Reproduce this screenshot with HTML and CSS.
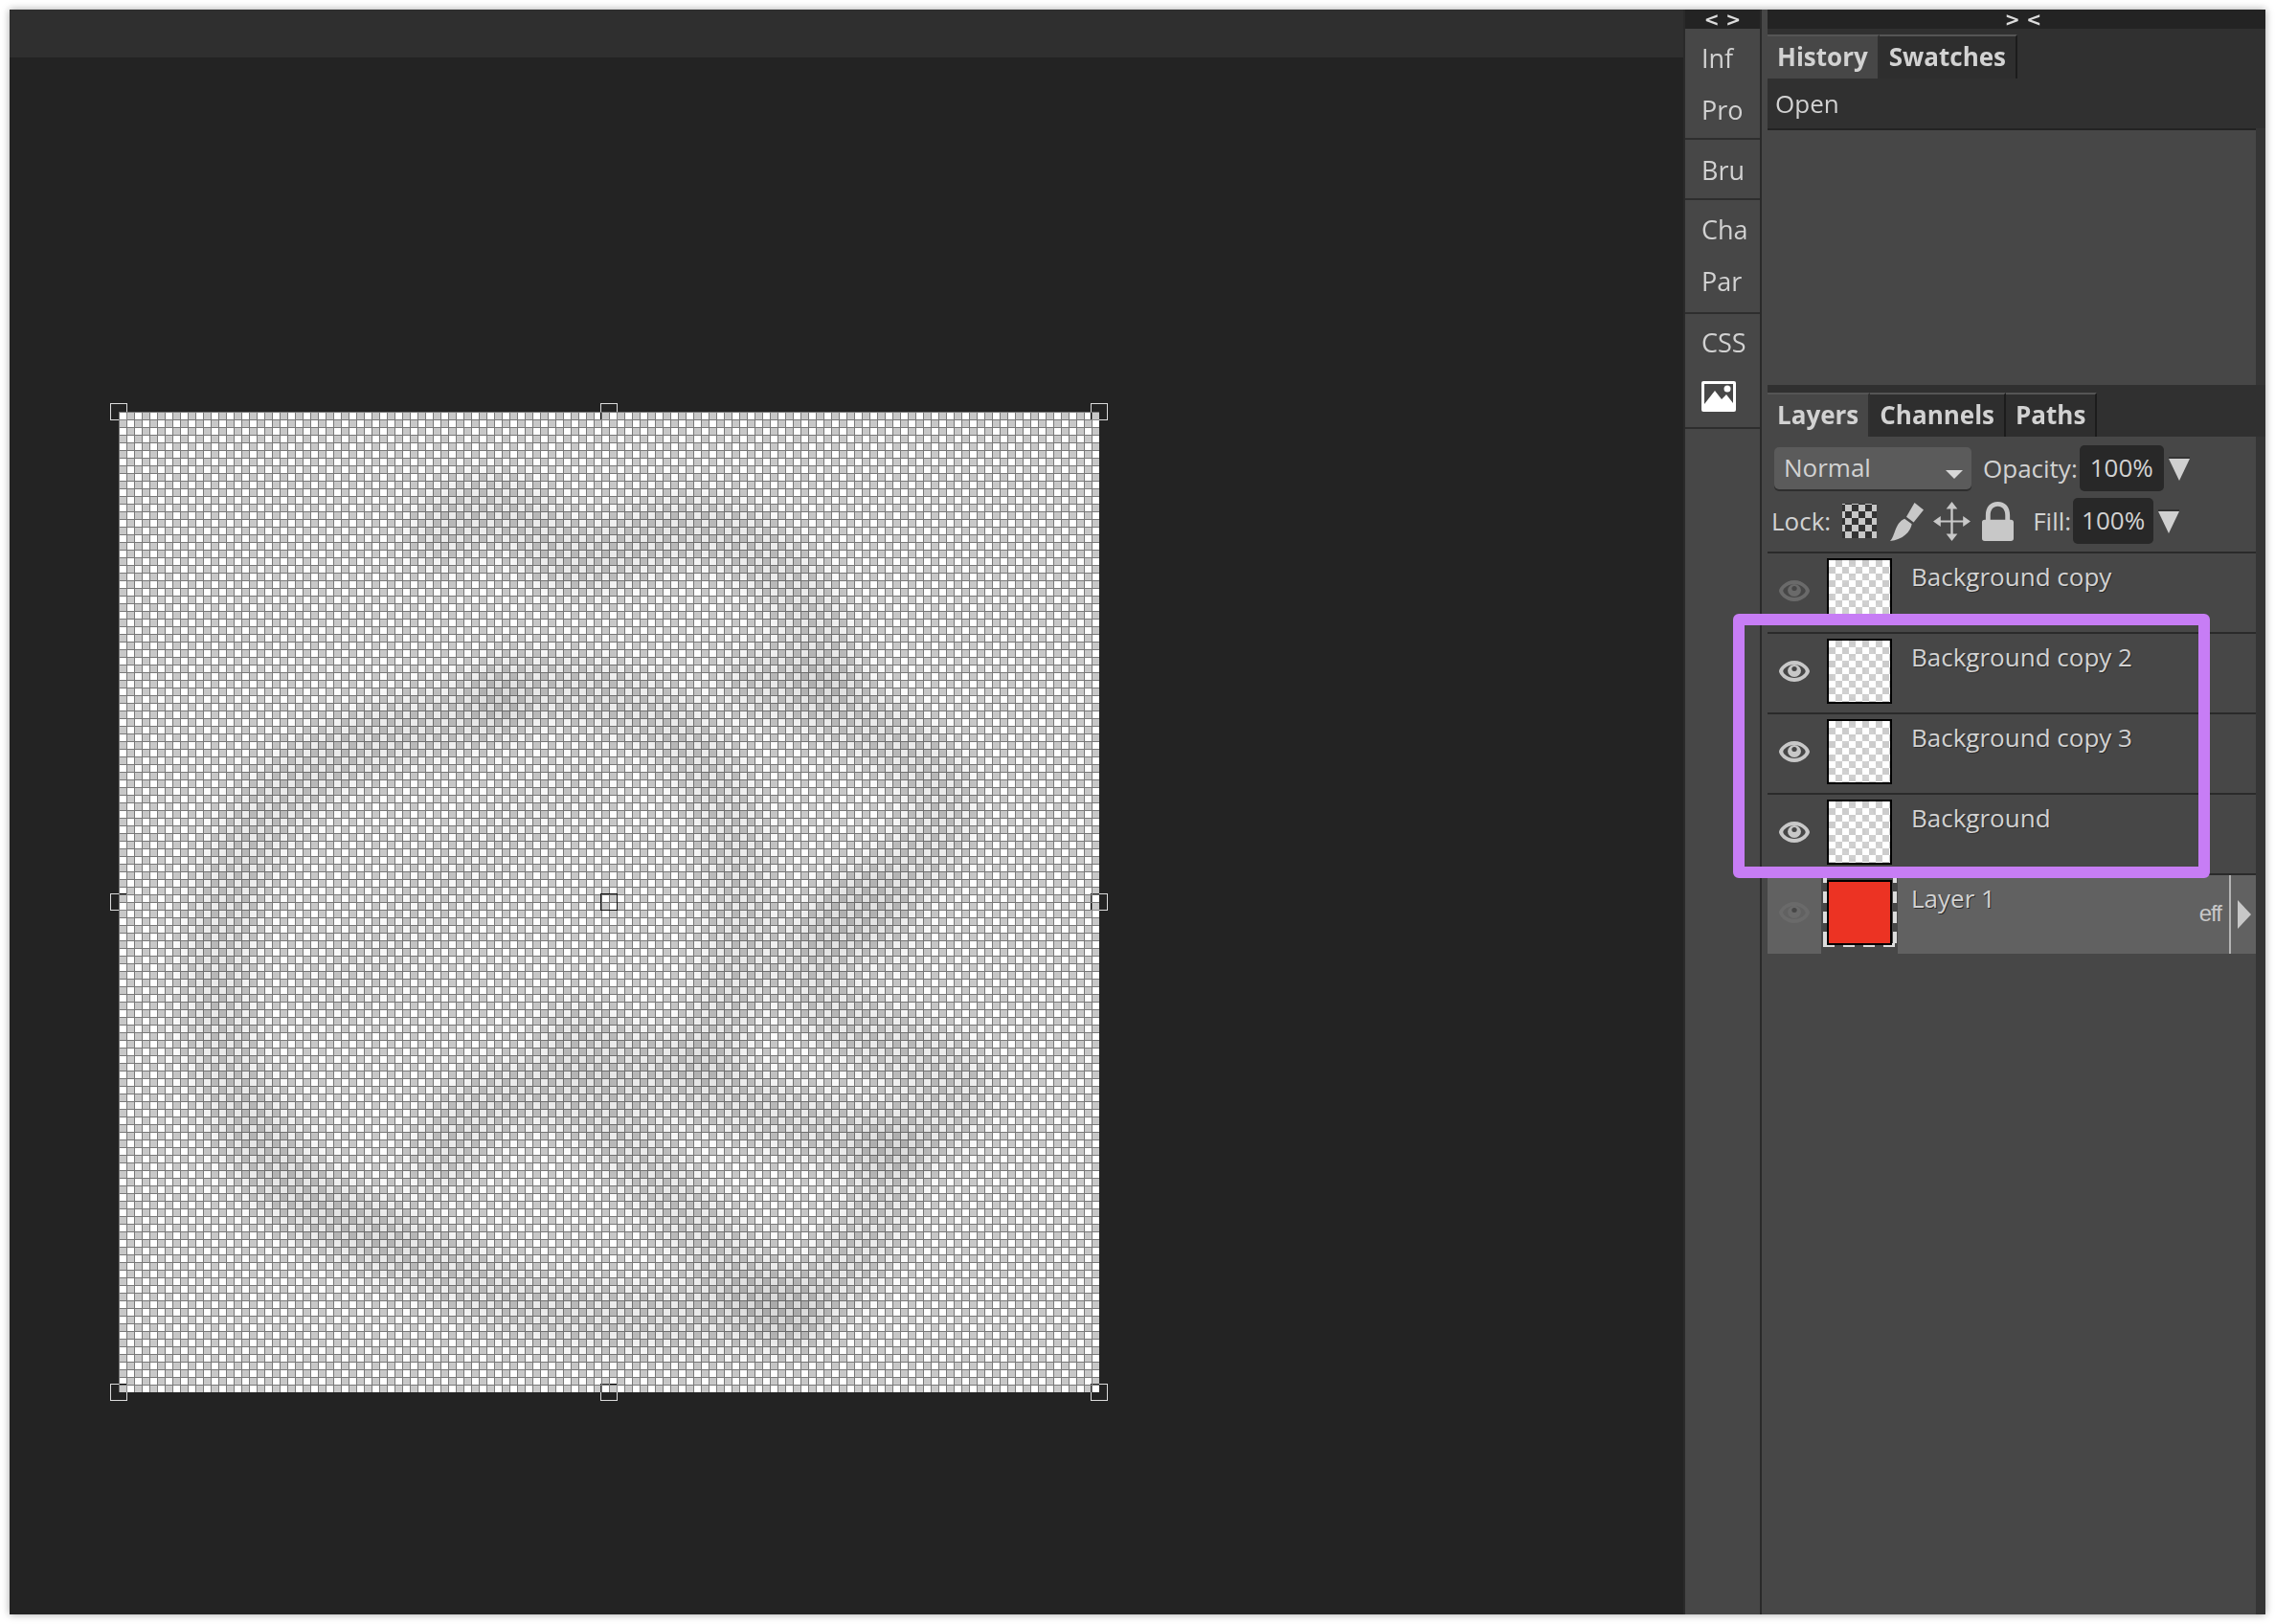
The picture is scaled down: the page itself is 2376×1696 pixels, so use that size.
FILE: index.html
```html
<!DOCTYPE html>
<html lang="en">
<head>
  <meta charset="UTF-8" />
  <title>Layers</title>
  <link rel="stylesheet" href="styles.css">
</head>
<body>
  <svg class="defs">
    <symbol id="smoke" viewBox="82 284 676 676">
      <g fill="none" stroke-opacity="0.13" stroke-width="48" stroke-linecap="round" stroke-linejoin="round">
        <path d="M305 368C325 340 360 345 385 385C420 400 450 350 500 368C540 385 560 420 572 462" />
        <path d="M340 490C270 500 200 520 170 585C140 650 145 740 180 800C215 850 280 860 320 880C370 920 480 905 550 905C590 880 610 830 615 800" />
        <path d="M350 475C420 470 480 490 500 560C515 620 515 670 490 720" />
        <path d="M520 470C590 490 650 520 650 560C640 610 575 620 560 670C565 720 650 720 662 750C650 790 600 790 540 770C480 750 430 730 395 712" />
        <path d="M305 800C320 760 360 735 410 765C450 800 470 850 545 905" />
        <path d="M570 640C590 610 610 620 615 650" stroke-opacity="0.07" />
        <path d="M190 770C210 820 240 830 270 845" stroke-opacity="0.05" />
        <path d="M230 680C280 660 340 560 400 540" stroke-opacity="0.05" />
      </g>
    </symbol>
    <symbol id="eye" viewBox="0 0 30 24" preserveAspectRatio="none">
      <path fill-rule="evenodd" d="M15 1C24 1 30 9 30 12S24 23 15 23S0 15 0 12S6 1 15 1ZM15 5C9 5 4 9.500 4 12S9 19 15 19S26 14.500 26 12S21 5 15 5Z" />
      <circle cx="15" cy="11.500" r="6.500" />
      <circle class="eye-pupil" cx="15" cy="9.500" r="2.500" />
    </symbol>
  </svg>

  <div class="window">
    <main class="workspace">
      <div class="topbar"></div>
      <div class="stage">
        <div class="artboard">
          <svg class="smoke"><use href="#smoke" /></svg>
          <span class="handle h-tl"></span>
          <span class="handle h-tc"></span>
          <span class="handle h-tr"></span>
          <span class="handle h-ml"></span>
          <span class="handle h-mc"></span>
          <span class="handle h-mr"></span>
          <span class="handle h-bl"></span>
          <span class="handle h-bc"></span>
          <span class="handle h-br"></span>
        </div>
      </div>
    </main>

    <aside class="dock">
      <div class="dock-head">&lt; &gt;</div>
      <div class="dock-group group-a">
        <div class="dock-item">Inf</div>
        <div class="dock-item">Pro</div>
      </div>
      <div class="dock-group group-b">
        <div class="dock-item">Bru</div>
      </div>
      <div class="dock-group group-c">
        <div class="dock-item">Cha</div>
        <div class="dock-item">Par</div>
      </div>
      <div class="dock-group group-d">
        <div class="dock-item">CSS</div>
        <div class="dock-item dock-icon">
          <svg width="36" height="32" viewBox="0 0 36 32">
            <rect width="36" height="32" rx="2" fill="#fff" />
            <path d="M3 3H33V23L26 14L21 19L14 10L3 24Z" fill="#474747" />
            <circle cx="27" cy="8" r="3.500" fill="#fff" />
          </svg>
        </div>
      </div>
    </aside>

    <section class="panels">
      <div class="panels-head">&gt; &lt;</div>

      <div class="tabs">
        <div class="tab active">History</div>
        <div class="tab">Swatches</div>
      </div>
      <div class="history-row">Open</div>
      <div class="history-empty"></div>

      <div class="tabs tabs-layers">
        <div class="tab active">Layers</div>
        <div class="tab">Channels</div>
        <div class="tab">Paths</div>
      </div>

      <div class="layers-panel">
        <div class="controls">
          <div class="select">Normal<span class="select-arrow"></span></div>
          <span class="label label-opacity">Opacity:</span>
          <div class="num">100%</div>
          <span class="drop"></span>
        </div>
        <div class="controls controls-lock">
          <span class="label">Lock:</span>
          <span class="lock-checker"></span>
          <svg class="lock-brush" width="36" height="41" viewBox="0 0 38 44" preserveAspectRatio="none" fill="#c8c8c8">
            <path d="M28 1L38 9L27 23L19 17Z" />
            <path d="M17 19L25 25C24 33 15 43 1 44C7 38 6 24 17 19Z" />
          </svg>
          <svg class="lock-move" width="39" height="41" viewBox="0 0 40 44" preserveAspectRatio="none" fill="#c8c8c8">
            <path d="M20 0L26 8H21.200V20.800H32V16L40 22L32 28V23.200H21.200V36H26L20 44L14 36H18.800V23.200H8V28L0 22L8 16V20.800H18.800V8H14Z" />
          </svg>
          <svg class="lock-pad" width="33" height="41" viewBox="0 0 34 44" preserveAspectRatio="none" fill="#c8c8c8">
            <path fill-rule="evenodd" d="M17 0C25 0 30 6 30 15V20H31C33 20 34 21 34 23V41C34 43 33 44 31 44H3C1 44 0 43 0 41V23C0 21 1 20 3 20H4V15C4 6 9 0 17 0ZM17 5C12 5 9 9 9 15V20H25V15C25 9 22 5 17 5Z" />
          </svg>
          <span class="label label-fill">Fill:</span>
          <div class="num num-fill">100%</div>
          <span class="drop"></span>
        </div>

        <div class="layer">
          <svg class="eye off"><use href="#eye" /></svg>
          <div class="thumb"><svg class="thumb-smoke"><use href="#smoke" /></svg></div>
          <div class="layer-name">Background copy</div>
        </div>
        <div class="layer">
          <svg class="eye"><use href="#eye" /></svg>
          <div class="thumb"><svg class="thumb-smoke"><use href="#smoke" /></svg></div>
          <div class="layer-name">Background copy 2</div>
        </div>
        <div class="layer">
          <svg class="eye"><use href="#eye" /></svg>
          <div class="thumb"><svg class="thumb-smoke"><use href="#smoke" /></svg></div>
          <div class="layer-name">Background copy 3</div>
        </div>
        <div class="layer">
          <svg class="eye"><use href="#eye" /></svg>
          <div class="thumb"><svg class="thumb-smoke"><use href="#smoke" /></svg></div>
          <div class="layer-name">Background</div>
        </div>
        <div class="layer selected">
          <svg class="eye off"><use href="#eye" /></svg>
          <div class="thumb-wrap"><div class="thumb red"></div></div>
          <div class="layer-name">Layer 1</div>
          <span class="eff">eff</span>
          <span class="eff-arrow"></span>
        </div>

        <div class="highlight"></div>
      </div>
    </section>
  </div>
</body>
</html>
```

FILE: styles.css
```css
body {
  margin: 0;
  background-color: #fff;
  font-family: "Open Sans", "Noto Sans", sans-serif;
  font-size: 26px;
  color: #d2d2d2;
}
.defs {
  position: absolute;
  width: 0;
  height: 0;
}
.window {
  display: flex;
  margin: 10px;
  height: 1676px;
  background-color: #474747;
  box-shadow: 0 0 8px rgba(0, 0, 0, 0.35);
}

/* canvas side */
.workspace {
  flex: 0 0 1748px;
  display: flex;
  flex-direction: column;
  background-color: #232323;
}
.topbar {
  height: 50px;
  background-color: #2f2f2f;
}
.stage {
  flex: 1;
  padding: 370px 0 0 114px;
}
.artboard {
  position: relative;
  width: 1024px;
  height: 1024px;
  background-color: #fff;
  background-image:
    repeating-linear-gradient(to right, #787878 0, #787878 1px, transparent 1px, transparent 8px),
    repeating-linear-gradient(to bottom, #787878 0, #787878 1px, transparent 1px, transparent 8px),
    conic-gradient(#c8c8c8 25%, #fff 0 50%, #c8c8c8 0 75%, #fff 0);
  background-size: 8px 8px, 8px 8px, 16px 16px;
}
.smoke {
  position: absolute;
  inset: 0;
  width: 1024px;
  height: 1024px;
  stroke: #595959;
  filter: blur(16px);
  mix-blend-mode: multiply;
}
.handle {
  position: absolute;
  width: 16px;
  height: 16px;
  margin: -9px 0 0 -9px;
  border: 1px solid #fff;
  mix-blend-mode: difference;
}
.h-tl { left: 0; top: 0; }
.h-tc { left: 50%; top: 0; }
.h-tr { left: 100%; top: 0; }
.h-ml { left: 0; top: 50%; }
.h-mc {
  left: 50%;
  top: 50%;
  border-color: #111;
  mix-blend-mode: normal;
}
.h-mr { left: 100%; top: 50%; }
.h-bl { left: 0; top: 100%; }
.h-bc { left: 50%; top: 100%; }
.h-br { left: 100%; top: 100%; }

/* collapsed panels */
.dock {
  flex: 0 0 82px;
  box-sizing: border-box;
  border-left: 2px solid #2a2a2a;
  border-right: 2px solid #2a2a2a;
  background-color: #474747;
}
.dock-head, .panels-head {
  height: 20px;
  line-height: 21px;
  text-align: center;
  font-family: "DejaVu Sans", sans-serif;
  font-size: 19px;
  font-weight: bold;
  color: #ddd;
  background-color: #232323;
}
.dock-group {
  padding-left: 17px;
  font-size: 27px;
  border-bottom: 2px solid #2e2e2e;
  box-sizing: border-box;
}
.group-a { height: 116px; padding-top: 8px; }
.group-b { height: 63px; padding-top: 9px; }
.group-c { height: 119px; padding-top: 8px; }
.group-d { height: 120px; padding-top: 7px; }
.dock-item {
  height: 54px;
  line-height: 46px;
}
.dock-icon {
  padding-top: 9px;
  box-sizing: border-box;
}
.dock-icon svg {
  display: block;
}

/* right side */
.panels {
  flex: 1;
  display: flex;
  flex-direction: column;
  border-left: 6px solid #474747;
  background-color: #353535;
}
.panels-head {
  padding-left: 14px;
  margin-bottom: 6px;
}
.tabs {
  display: flex;
  height: 46px;
  background-color: #303030;
  box-shadow: 0 -6px 0 #303030;
}
.tab {
  padding: 0 10px;
  line-height: 42px;
  font-weight: bold;
  background-color: #2e2e2e;
  border-top: 2px solid #555;
  border-right: 2px solid #1c1c1c;
  box-sizing: border-box;
}
.tab.active {
  background-color: #474747;
  border-right-color: #303030;
}
.history-row {
  height: 52px;
  line-height: 52px;
  padding-left: 8px;
  background-color: #303030;
}
.history-empty {
  height: 266px;
  margin-right: 10px;
  background-color: #474747;
  border-top: 2px solid #232323;
}
.tabs-layers {
  margin-top: 8px;
  box-shadow: 0 -8px 0 #303030;
}
.layers-panel {
  position: relative;
  flex: 1;
  background-color: #474747;
  box-shadow: inset -10px 0 0 #353535;
}
.controls {
  display: flex;
  align-items: center;
  height: 50px;
  padding: 8px 0 0 7px;
}
.controls-lock {
  height: 48px;
  padding: 6px 0 8px 4px;
}
.select {
  position: relative;
  width: 206px;
  height: 44px;
  padding-left: 10px;
  line-height: 42px;
  box-sizing: border-box;
  background-color: #5b5b5b;
  border-radius: 5px;
  box-shadow: 0 2px 0 #2e2e2e;
}
.select-arrow {
  position: absolute;
  right: 9px;
  bottom: 11px;
  border-style: solid;
  border-width: 9px 9px 0;
  border-color: #d8d8d8 transparent transparent;
}
.label {
  margin-right: 2px;
}
.label-opacity {
  margin-left: 12px;
}
.label-fill {
  margin-left: 20px;
}
.num {
  width: 88px;
  height: 48px;
  line-height: 46px;
  text-align: center;
  border-radius: 5px;
  background-color: #282828;
}
.num-fill {
  width: 84px;
}
.drop {
  margin-left: 5px;
  border-top: 2px solid #333;
}
.drop::before {
  content: "";
  display: block;
  border-style: solid;
  border-width: 23px 11px 0;
  border-color: #d0d0d0 transparent transparent;
}
.lock-checker {
  width: 36px;
  height: 36px;
  margin-left: 10px;
  background-color: #c8c8c8;
  background-image: conic-gradient(#333 25%, #c8c8c8 0 50%, #333 0 75%, #c8c8c8 0);
  background-size: 14px 14px;
  background-position: 3px 1px;
}
.lock-brush {
  margin-left: 13px;
}
.lock-move {
  margin-left: 10px;
}
.lock-pad {
  margin-left: 12px;
}
.layer {
  position: relative;
  display: flex;
  height: 82px;
  margin-right: 10px;
  border-top: 2px solid #2a2a2a;
}
.eye {
  flex: 0 0 32px;
  width: 32px;
  height: 24px;
  margin: 27px 18px 0 12px;
  fill: #c8c8c8;
}
.eye.off {
  fill: #6a6a6a;
}
.eye-pupil {
  fill: #474747;
}
.thumb {
  position: relative;
  flex: 0 0 auto;
  width: 64px;
  height: 64px;
  margin-top: 5px;
  overflow: hidden;
  border: 2px solid #000;
  background-color: #fff;
  background-image: conic-gradient(#ccc 25%, #fff 0 50%, #ccc 0 75%, #fff 0);
  background-size: 14px 14px;
}
.thumb-smoke {
  position: absolute;
  inset: 0;
  width: 64px;
  height: 64px;
  stroke: #fff;
  opacity: 0.7;
}
.thumb.red {
  margin: 5px 0 0 6px;
  background: #ec3323;
}
.layer-name {
  margin: 5px 0 0 20px;
  line-height: 38px;
  text-shadow: 1px 1px 0 #2c2c2c;
}
.selected {
  background-color: #616161;
}
.selected .eye {
  margin-right: 12px;
}
.selected .layer-name {
  margin-left: 14px;
}
.thumb-wrap {
  position: relative;
  flex: 0 0 80px;
  background-color: #474747;
}
/* marching ants round the selected layer */
.thumb-wrap::before {
  content: "";
  position: absolute;
  left: 2px;
  right: 1px;
  top: -4px;
  bottom: 7px;
  background:
    repeating-linear-gradient(to right, #ddd 0 12px, transparent 12px 21px) top / 100% 4px no-repeat,
    repeating-linear-gradient(to right, #ddd 0 12px, transparent 12px 21px) bottom / 100% 4px no-repeat,
    repeating-linear-gradient(to bottom, #ddd 0 12px, transparent 12px 21px) left / 4px 100% no-repeat,
    repeating-linear-gradient(to bottom, #ddd 0 12px, transparent 12px 21px) right / 4px 100% no-repeat;
}
.eff {
  position: absolute;
  right: 36px;
  top: 26px;
  font-family: "Liberation Sans", sans-serif;
  font-size: 24px;
  color: #c8c8c8;
  letter-spacing: -1px;
}
.eff-arrow {
  position: absolute;
  right: 0;
  top: 0;
  width: 28px;
  height: 82px;
  border-left: 2px solid #b4b4b4;
  box-sizing: border-box;
}
.eff-arrow::after {
  content: "";
  position: absolute;
  left: 7px;
  top: 26px;
  border-style: solid;
  border-width: 15px 0 15px 14px;
  border-color: transparent transparent transparent #c8c8c8;
}
.highlight {
  position: absolute;
  left: -36px;
  top: 185px;
  width: 498px;
  height: 276px;
  box-sizing: border-box;
  border: 12px solid #c77df5;
  border-radius: 6px;
}
```
